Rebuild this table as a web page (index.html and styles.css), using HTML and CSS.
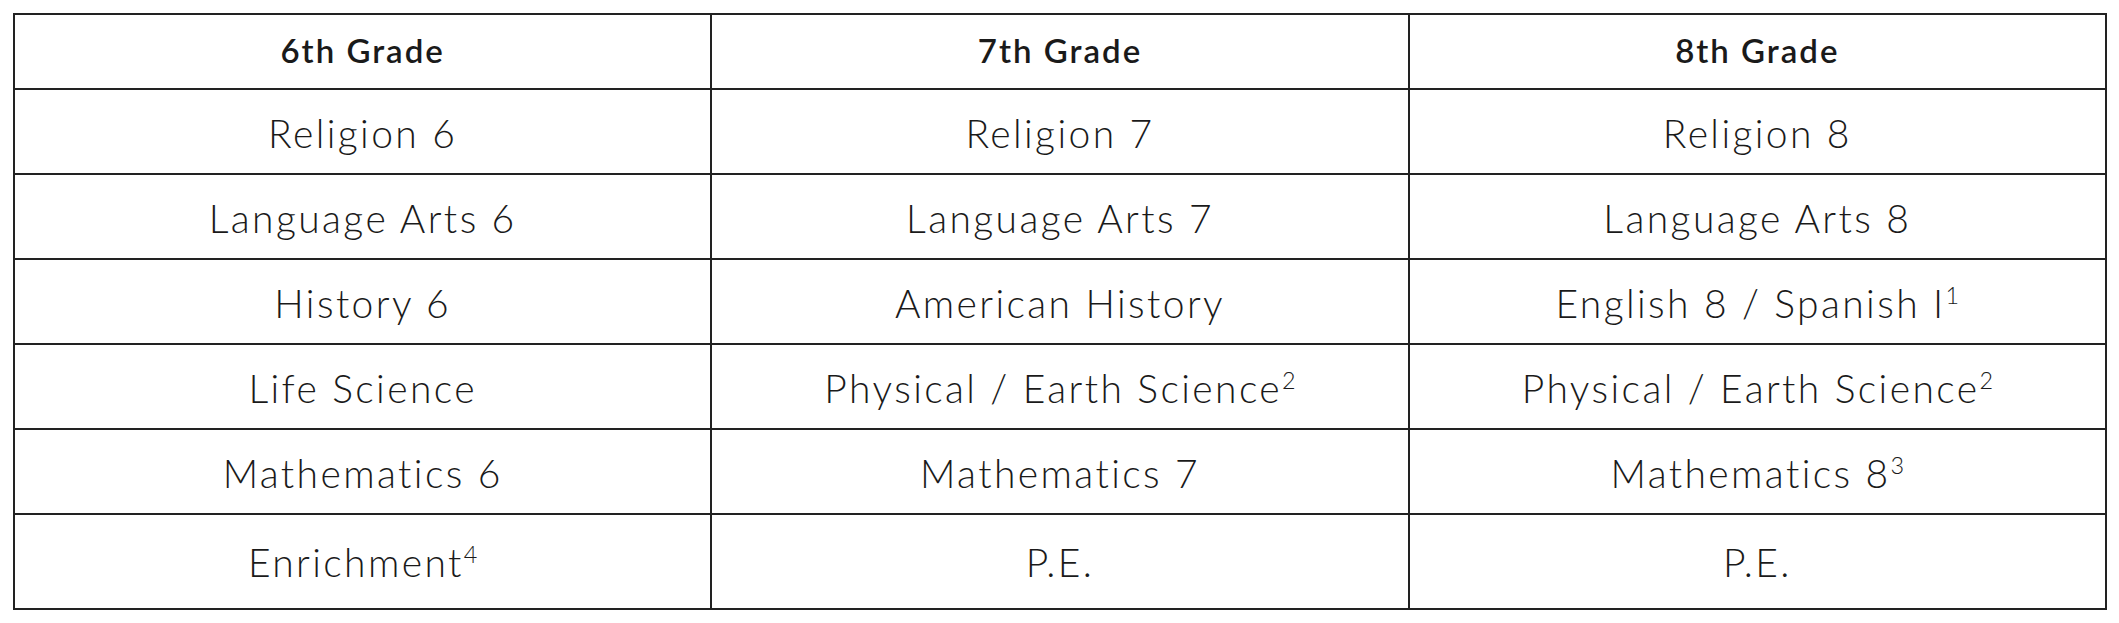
FILE: index.html
```html
<!DOCTYPE html>
<html lang="en">
<head>
<meta charset="utf-8">
<title>Middle School Courses</title>
<link rel="stylesheet" href="styles.css">
</head>
<body>
<table class="courses">
  <thead>
    <tr class="head-row">
      <th>6th Grade</th>
      <th>7th Grade</th>
      <th>8th Grade</th>
    </tr>
  </thead>
  <tbody>
    <tr><td>Religion 6</td><td>Religion 7</td><td>Religion 8</td></tr>
    <tr><td>Language Arts 6</td><td>Language Arts 7</td><td>Language Arts 8</td></tr>
    <tr><td>History 6</td><td>American History</td><td>English 8 / Spanish I<sup>1</sup></td></tr>
    <tr><td>Life Science</td><td>Physical / Earth Science<sup>2</sup></td><td>Physical / Earth Science<sup>2</sup></td></tr>
    <tr><td>Mathematics 6</td><td>Mathematics 7</td><td>Mathematics 8<sup>3</sup></td></tr>
    <tr class="last-row"><td>Enrichment<sup>4</sup></td><td>P.E.</td><td>P.E.</td></tr>
  </tbody>
</table>
</body>
</html>
```
FILE: styles.css
```css
html, body {
  margin: 0;
  padding: 0;
  background: #ffffff;
}
body {
  padding: 13px 0 0 13px;
  font-family: "Lato", "Liberation Sans", sans-serif;
  color: #1a1a1a;
}
.courses {
  border-collapse: collapse;
  width: 2094px;
  table-layout: fixed;
}
.courses th,
.courses td {
  border: 2px solid #222222;
  text-align: center;
  vertical-align: middle;
  padding: 0;
}
.courses th {
  height: 70px;
  padding-bottom: 3px;
  font-size: 33px;
  font-weight: 600;
  letter-spacing: 2px;
}
.courses td {
  height: 81px;
  padding-top: 2px;
  font-size: 39px;
  font-weight: 300;
  letter-spacing: 2.4px;
}
.courses .last-row td {
  height: 89px;
  padding-top: 2px;
  padding-bottom: 2px;
}
.courses sup {
  font-size: 0.6em;
  vertical-align: 0.62em;
  line-height: 0;
  letter-spacing: 0;
}
```
